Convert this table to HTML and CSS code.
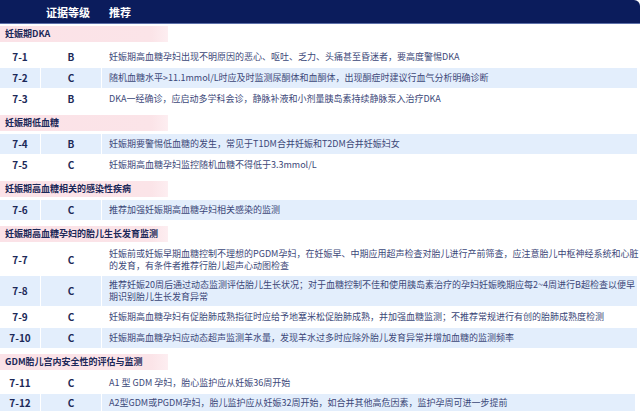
FILE: index.html
```html
<!DOCTYPE html>
<html lang="zh">
<head>
<meta charset="utf-8">
<link rel="stylesheet" href="styles.css">
</head>
<body>
<div class="table">
  <div class="thead">
    <div class="th"></div>
    <div class="th th-grade">证据等级</div>
    <div class="th th-rec">推荐</div>
  </div>

  <div class="section first">妊娠期DKA</div>
  <div class="row"><div class="id">7-1</div><div class="grade">B</div><div class="rec">妊娠期高血糖孕妇出现不明原因的恶心、呕吐、乏力、头痛甚至昏迷者，要高度警惕DKA</div></div>
  <div class="row alt"><div class="id">7-2</div><div class="grade">C</div><div class="rec">随机血糖水平&gt;11.1mmol/L时应及时监测尿酮体和血酮体，出现酮症时建议行血气分析明确诊断</div></div>
  <div class="row"><div class="id">7-3</div><div class="grade">B</div><div class="rec">DKA一经确诊，应启动多学科会诊，静脉补液和小剂量胰岛素持续静脉泵入治疗DKA</div></div>

  <div class="section">妊娠期低血糖</div>
  <div class="row alt"><div class="id">7-4</div><div class="grade">B</div><div class="rec">妊娠期要警惕低血糖的发生，常见于T1DM合并妊娠和T2DM合并妊娠妇女</div></div>
  <div class="row"><div class="id">7-5</div><div class="grade">C</div><div class="rec">妊娠期高血糖孕妇监控随机血糖不得低于3.3mmol/L</div></div>

  <div class="section">妊娠期高血糖相关的感染性疾病</div>
  <div class="row alt"><div class="id">7-6</div><div class="grade">C</div><div class="rec">推荐加强妊娠期高血糖孕妇相关感染的监测</div></div>

  <div class="section">妊娠期高血糖孕妇的胎儿生长发育监测</div>
  <div class="row tall"><div class="id">7-7</div><div class="grade">C</div><div class="rec">妊娠前或妊娠早期血糖控制不理想的PGDM孕妇，在妊娠早、中期应用超声检查对胎儿进行产前筛查，应注意胎儿中枢神经系统和心脏<br>的发育，有条件者推荐行胎儿超声心动图检查</div></div>
  <div class="row tall alt"><div class="id">7-8</div><div class="grade">C</div><div class="rec">推荐妊娠20周后通过动态监测评估胎儿生长状况；对于血糖控制不佳和使用胰岛素治疗的孕妇妊娠晚期应每2~4周进行B超检查以便早<br>期识别胎儿生长发育异常</div></div>
  <div class="row"><div class="id">7-9</div><div class="grade">C</div><div class="rec">妊娠期高血糖孕妇有促胎肺成熟指征时应给予地塞米松促胎肺成熟，并加强血糖监测；不推荐常规进行有创的胎肺成熟度检测</div></div>
  <div class="row alt"><div class="id">7-10</div><div class="grade">C</div><div class="rec">妊娠期高血糖孕妇应动态超声监测羊水量，发现羊水过多时应除外胎儿发育异常并增加血糖的监测频率</div></div>

  <div class="section">GDM胎儿宫内安全性的评估与监测</div>
  <div class="row"><div class="id">7-11</div><div class="grade">C</div><div class="rec">A1 型 GDM 孕妇，胎心监护应从妊娠36周开始</div></div>
  <div class="row alt last"><div class="id">7-12</div><div class="grade">C</div><div class="rec">A2型GDM或PGDM孕妇，胎儿监护应从妊娠32周开始，如合并其他高危因素，监护孕周可进一步提前</div></div>
</div>
</body>
</html>
```

FILE: styles.css
```css
* { box-sizing: border-box; }
html, body {
  margin: 0;
  padding: 0;
  background: #ffffff;
}
body {
  width: 640px;
  height: 411px;
  overflow: hidden;
  font-family: "Noto Sans CJK SC", "Noto Sans", sans-serif;
}
.table {
  display: flex;
  flex-direction: column;
  width: 640px;
}
.thead {
  display: grid;
  grid-template-columns: 40px 60px 1fr;
  column-gap: 1px;
  height: 24px;
  background: #0b1c5c;
  border-bottom: 1px solid #5d70a9;
  border-top-right-radius: 6px;
  align-items: center;
}
.th {
  color: #ffffff;
  font-weight: 700;
  font-size: 11px;
  line-height: 14px;
}
.th-grade {
  text-align: center;
  padding-right: 6px;
}
.th-rec {
  padding-left: 7px;
}
.section {
  width: 168px;
  height: 16px;
  margin: 5px 0 3px;
  padding-left: 5px;
  display: flex;
  align-items: center;
  background: linear-gradient(90deg, #fbe2e7 0%, #fbe4e8 90%, #fdeef1 100%);
  color: #1b2858;
  font-weight: 700;
  font-size: 9px;
  line-height: 12px;
}
.section.first {
  margin-top: 2px;
  margin-bottom: 5px;
}
.row {
  display: grid;
  grid-template-columns: 40px 60px 1fr;
  column-gap: 1px;
  width: 637px;
  height: 20px;
  margin-bottom: 1px;
}
.row.tall {
  height: 30px;
}
.row > div {
  display: flex;
  align-items: center;
}
.row.alt > div {
  background: #e3eefc;
}
.row.last {
  margin-bottom: 0;
  border-bottom: 2px solid #35457f;
  height: 20px;
  width: 640px;
  grid-template-columns: 40px 60px 533px;
}
.id, .grade {
  justify-content: center;
  color: #1c2958;
  font-weight: 700;
  font-size: 10px;
  line-height: 12px;
}
.rec {
  padding-left: 7px;
  color: #3b4778;
  font-size: 9px;
  line-height: 12px;
  white-space: nowrap;
}
```
